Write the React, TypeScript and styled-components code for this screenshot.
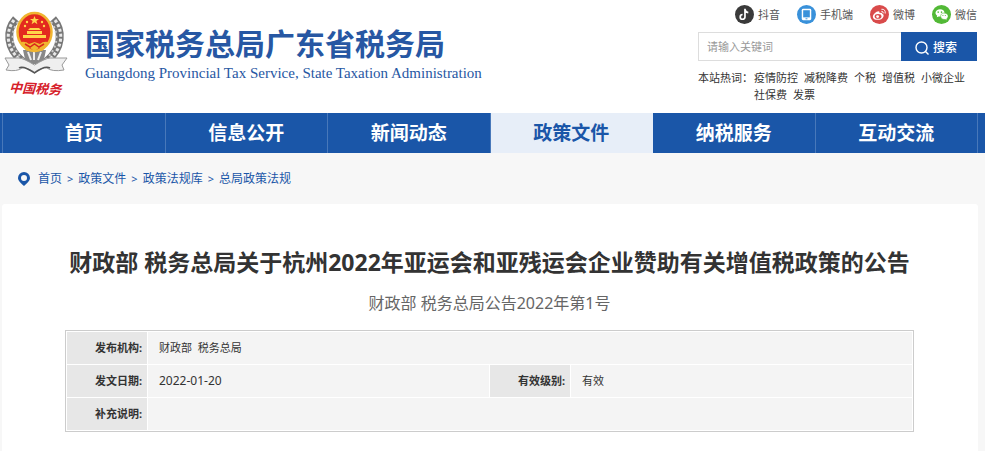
import React from "react";
import styled, { createGlobalStyle } from "styled-components";

const sans = `"Noto Sans", "Noto Sans CJK SC", sans-serif`;
const blue = "#1a56a8";

const GlobalStyle = createGlobalStyle`
  * { box-sizing: border-box; }
  body { margin: 0; background: #f7f7f7; color: #333; font: 11px/18px ${sans}; }
  a { color: inherit; text-decoration: none; }
  h1, h2, p { margin: 0; }
`;

const Header = styled.header`
  display: flex;
  justify-content: space-between;
  min-height: 113px;
  padding: 0 8px 0 3px;
  background: #fff;
`;

const Brand = styled.a`
  display: flex;
  gap: 16px;
  color: #2757a3;
`;

const Emblem = styled.svg`
  flex: none;
  width: 66px;
  height: 92px;
  margin-top: 10px;
`;

const BrandText = styled.div`
  padding-top: 24px;
  white-space: nowrap;
`;

const BrandName = styled.div`
  font-size: 30px;
  font-weight: 700;
  line-height: 40px;
`;

const BrandSub = styled.div`
  font: 15px/18px "Liberation Serif", serif;
`;

const Tools = styled.div`
  width: 279px;
  flex: none;
`;

const Channels = styled.nav`
  display: flex;
  justify-content: flex-end;
  gap: 17px;
  height: 32px;
  padding-top: 5px;
  color: #555;
`;

const Channel = styled.a`
  display: flex;
  gap: 4px;
  line-height: 20px;
  svg { width: 19px; height: 19px; }
`;

const Search = styled.form`
  display: flex;
  height: 29px;
`;

const SearchInput = styled.input`
  flex: 1;
  min-width: 0;
  padding: 0 8px;
  border: 1px solid #ddd;
  border-right: 0;
  outline: 0;
  font: 11px/18px ${sans};
  &::placeholder { color: #999; }
`;

const SearchButton = styled.button`
  display: flex;
  align-items: center;
  justify-content: center;
  gap: 4px;
  width: 76px;
  padding: 2px 6px 0 0;
  border: 0;
  background: ${blue};
  color: #fff;
  font: 500 12px/18px ${sans};
`;

const HotWords = styled.div`
  display: flex;
  padding-top: 8px;
  line-height: 17px;
  span { flex: none; width: 56px; }
`;

const HotList = styled.div`
  display: flex;
  flex-wrap: wrap;
  column-gap: 6px;
`;

const MainNav = styled.nav`
  display: flex;
  padding: 0 7px 0 2px;
  background: ${blue};
`;

const NavItem = styled.a<{ $active?: boolean }>`
  flex: 1;
  border-right: 1px solid ${(p) => (p.$active ? "#e7eef8" : "#4878ba")};
  background: ${(p) => (p.$active ? "#e7eef8" : blue)};
  color: ${(p) => (p.$active ? blue : "#fff")};
  font-size: 19px;
  font-weight: 700;
  line-height: 40px;
  text-align: center;
  &:first-child { border-left: 1px solid #4878ba; }
`;

const Crumbs = styled.nav`
  display: flex;
  align-items: center;
  gap: 5px;
  height: 51px;
  padding-left: 17px;
  color: ${blue};
  font-size: 12px;
  svg { width: 14px; height: 16px; margin-right: 2px; }
  span { font-size: 11px; }
`;

const Card = styled.main`
  min-height: 247px;
  margin: 0 7px 0 2px;
  padding: 41px 64px 19px 63px;
  border-radius: 3px 3px 0 0;
  background: #fff;
  text-align: center;
`;

const Title = styled.h1`
  font-size: 23px;
  font-weight: 700;
  line-height: 34px;
`;

const DocNumber = styled.p`
  margin: 11px 0 14px;
  color: #666;
  font-size: 16px;
  line-height: 26px;
`;

const Info = styled.table`
  width: 100%;
  border: 1px solid #ccc;
  border-spacing: 1px;
  table-layout: fixed;
  text-align: left;
  th, td { height: 32px; padding: 0; }
  th { padding-right: 5px; background: #e7e7e7; text-align: right; }
  td { padding-left: 11px; background: #f4f4f4; }
  time { font-size: 12px; }
`;

const LabelCol = styled.col`
  width: 80px;
`;

function Logo() {
  return (
    <Emblem viewBox="0 0 66 92" role="img" aria-label="中国税务">
      <g fill="none">
        <path d="M13 9C3 20 3 38 20 52M50 9C60 20 60 38 43 52" stroke="#777" strokeWidth="8" />
        <path d="M11 10C2 22 3 38 18 51M52 10C61 22 60 38 45 51" stroke="#e8e8e8" strokeWidth="3" strokeDasharray="3 2" />
        <path d="M15 12C7 22 7 38 21 50M48 12C56 22 56 38 42 50" stroke="#ccc" strokeWidth="2" strokeDasharray="2 3" />
      </g>
      <path d="M20 40h23l-3 14H23z" fill="#888" />
      <path d="M25 42l3 8M38 42l-3 8M31 42v8" stroke="#eee" strokeWidth="2" />
      <ellipse cx="31.500" cy="22" rx="17" ry="19" fill="#e32a1f" stroke="#f0b531" strokeWidth="2.500" />
      <path d="M31.500 6l1.200 3h3.300l-2.600 2 1 3.200-2.900-2-2.900 2 1-3.200-2.600-2h3.300zM25 20l2-2h9l2 2zM24 21h15v3H24zM20 25h23v3H20z" fill="#ffd54a" />
      <g fill="#ffd54a"><circle cx="24" cy="12" r="1.200" /><circle cx="39" cy="12" r="1.200" /><circle cx="22" cy="16" r="1.200" /><circle cx="41" cy="16" r="1.200" /></g>
      <path d="M18 32q5-1 8 2l5.500-2 5.500 2q3-3 8-2-2 6-6 9l-3-3-4.500 3-4.500-3-3 3q-4-3-6-9z" fill="#f0b531" />
      <path d="M22 34l5 3 4.500-3 4.500 3 5-3" fill="none" stroke="#d9261d" strokeWidth="1.500" />
      <path d="M2 48l14 0q4 0 15.500 7Q43 48 47 48l17 0-5 7 2 5q-12 2-17-2-4-1-12.500 4Q23 57 19 58q-5 4-16 2l3-5z" fill="#efefef" stroke="#999" />
      <path d="M16 58q4-3 15.500 5Q42 55 47 58" fill="none" stroke="#555" strokeWidth="1.500" />
      <text x="6" y="82" transform="rotate(3 6 82)" fill="#d6202a" fontSize="13" fontStyle="italic" fontWeight="700" fontFamily='"Noto Sans CJK SC", sans-serif'>中国税务</text>
    </Emblem>
  );
}

const icons: Record<string, React.ReactNode> = {
  抖音: (
    <>
      <circle cx="10" cy="10" r="10" fill="#3a3a3a" />
      <path d="M10.500 4v8.500a2.500 2.500 0 1 1-2.500-2.500M10.500 4.500q.5 3 3.500 3.500" fill="none" stroke="#fff" strokeWidth="1.800" />
    </>
  ),
  手机端: (
    <>
      <circle cx="10" cy="10" r="10" fill="#3991da" />
      <rect x="5" y="4" width="10" height="12" rx="1.500" fill="#fff" />
      <rect x="6.500" y="5.500" width="7" height="7.500" fill="#3991da" />
      <path d="M9 14.500h2" stroke="#3991da" />
    </>
  ),
  微博: (
    <>
      <circle cx="10" cy="10" r="10" fill="#d94b4b" />
      <path d="M9 6.500q1.500 0 1 2 3-1 3 1 2 .5 1 3-1.500 3-6 3t-5-3q0-3 4-5.500 1-.5 2-.5z" fill="#fff" />
      <ellipse cx="8.500" cy="12" rx="3.600" ry="2.500" fill="#d94b4b" />
      <circle cx="8" cy="12.200" r="1.500" fill="#fff" />
      <path d="M12 4.500q4.500-.5 4 4.500M12 6.700q2-.2 2 2" fill="none" stroke="#fff" />
    </>
  ),
  微信: (
    <>
      <circle cx="10" cy="10" r="10" fill="#52b936" />
      <path d="M8.500 4.500c6 0 6.500 7.500.5 7.500l-2 0-2 1 .5-1.800C2 9 4 4.500 8.500 4.500z" fill="#fff" />
      <path d="M12.500 8.500c5 0 5.500 4.500 3 6l.3 1.500-1.800-.8c-6 .8-6.500-6.700-1.500-6.700z" fill="#fff" stroke="#52b936" strokeWidth=".6" />
      <g fill="#52b936"><circle cx="6.500" cy="7.500" r=".8" /><circle cx="10" cy="7.500" r=".8" /><circle cx="11.500" cy="11" r=".6" /><circle cx="14" cy="11" r=".6" /></g>
    </>
  ),
};

const channels = ["抖音", "手机端", "微博", "微信"];
const hot = ["疫情防控", "减税降费", "个税", "增值税", "小微企业", "社保费", "发票"];
const nav = ["首页", "信息公开", "新闻动态", "政策文件", "纳税服务", "互动交流"];
const crumbs = ["首页", "政策文件", "政策法规库", "总局政策法规"];

export default function App() {
  return (
    <>
      <GlobalStyle />
      <Header>
        <Brand href="#">
          <Logo />
          <BrandText>
            <BrandName>国家税务总局广东省税务局</BrandName>
            <BrandSub>Guangdong Provincial Tax Service, State Taxation Administration</BrandSub>
          </BrandText>
        </Brand>
        <Tools>
          <Channels>
            {channels.map((c) => (
              <Channel href="#" key={c}>
                <svg viewBox="0 0 20 20" aria-hidden="true">{icons[c]}</svg>
                {c}
              </Channel>
            ))}
          </Channels>
          <Search onSubmit={(e) => e.preventDefault()}>
            <SearchInput placeholder="请输入关键词" aria-label="请输入关键词" />
            <SearchButton>
              <svg width="14" height="14" viewBox="0 0 14 14" fill="none" stroke="#fff" strokeWidth="1.400" aria-hidden="true">
                <circle cx="6.500" cy="6.500" r="5.500" />
                <path d="M10.500 10.500l3 3" />
              </svg>
              搜索
            </SearchButton>
          </Search>
          <HotWords>
            <span>本站热词：</span>
            <HotList>
              {hot.map((h) => <a href="#" key={h}>{h}</a>)}
            </HotList>
          </HotWords>
        </Tools>
      </Header>
      <MainNav>
        {nav.map((n) => <NavItem href="#" key={n} $active={n === "政策文件"}>{n}</NavItem>)}
      </MainNav>
      <Crumbs>
        <svg viewBox="0 0 14 16" aria-hidden="true">
          <path fillRule="evenodd" fill={blue} d="M7 1a6 6 0 0 1 6 6c0 3-3 5-6 8-3-3-6-5-6-8a6 6 0 0 1 6-6zm0 3a3 3 0 1 0 0 6 3 3 0 0 0 0-6z" />
        </svg>
        {crumbs.map((c, i) => (
          <React.Fragment key={c}>
            {i > 0 && <span>&gt;</span>}
            <a href="#">{c}</a>
          </React.Fragment>
        ))}
      </Crumbs>
      <Card>
        <Title>财政部 税务总局关于杭州2022年亚运会和亚残运会企业赞助有关增值税政策的公告</Title>
        <DocNumber>财政部 税务总局公告2022年第1号</DocNumber>
        <Info>
          <colgroup><LabelCol /><col /><LabelCol /><col /></colgroup>
          <tbody>
            <tr><th scope="row">发布机构:</th><td colSpan={3}>财政部&nbsp; 税务总局</td></tr>
            <tr><th scope="row">发文日期:</th><td><time>2022-01-20</time></td><th scope="row">有效级别:</th><td>有效</td></tr>
            <tr><th scope="row">补充说明:</th><td colSpan={3} /></tr>
          </tbody>
        </Info>
      </Card>
    </>
  );
}
